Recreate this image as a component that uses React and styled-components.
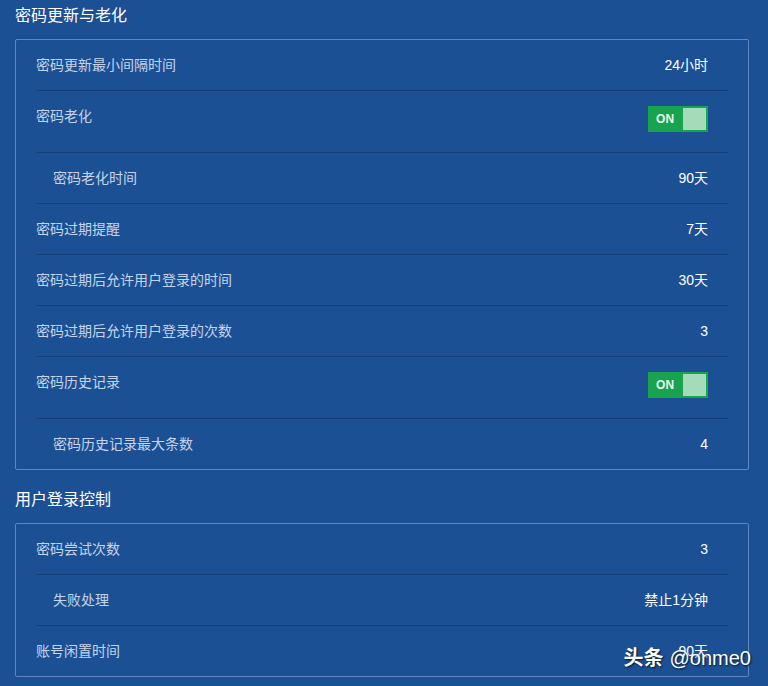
import React from "react";
import styled, { createGlobalStyle } from "styled-components";

const Global = createGlobalStyle`
  html, body {
    margin: 0;
    padding: 0;
    background: #1c5094;
    height: 686px;
    overflow: hidden;
  }
  body {
    font-family: "Liberation Sans", "Noto Sans CJK SC", sans-serif;
  }
`;

const Page = styled.div`
  position: relative;
  height: 686px;
  padding: 5px 19px 0 15px;
  box-sizing: border-box;
  background: #1c5094;
`;

const Section = styled.section`
  margin-top: ${(p) => (p.$first ? "0" : "19px")};
`;

const Title = styled.h2`
  margin: 0 0 12px;
  height: 22px;
  line-height: 22px;
  font-size: 16px;
  font-weight: 400;
  color: #ffffff;
`;

const Card = styled.div`
  border: 1px solid #6186c0;
  border-radius: 2px;
  padding: 0 20px;
`;

const Row = styled.div`
  display: flex;
  justify-content: space-between;
  align-items: flex-start;
  padding: ${(p) => (p.$toggle ? "15px 20px 20px 0" : "15px 20px 15px 0")};
  padding-left: ${(p) => (p.$indent ? "17px" : "0")};
  border-bottom: 1px solid #143f79;
  &:last-child {
    border-bottom: none;
  }
`;

const Label = styled.span`
  font-size: 14px;
  line-height: 20px;
  color: #c6d4ea;
`;

const Value = styled.span`
  font-size: 14px;
  line-height: 20px;
  color: #ffffff;
  font-weight: 400;
`;

const Switch = styled.div`
  width: 60px;
  height: 26px;
  box-sizing: border-box;
  background: #1aa34f;
  padding: 2px 2px 2px 8px;
  display: flex;
  align-items: center;
  justify-content: space-between;
`;

const SwitchText = styled.span`
  font-size: 12px;
  font-weight: 700;
  color: #e8f6ee;
  letter-spacing: 0.2px;
`;

const Knob = styled.span`
  width: 23px;
  height: 22px;
  background: #a4dbb9;
`;

const Watermark = styled.div`
  position: absolute;
  right: 17px;
  bottom: 15px;
  font-size: 20px;
  line-height: 26px;
  color: #ffffff;
  text-shadow: 1px 1px 2px rgba(0, 0, 0, 0.75);
  font-family: "Liberation Sans", "Noto Sans CJK SC", sans-serif;
  white-space: nowrap;
`;

const Strong = styled.b`
  font-weight: 700;
  margin-right: 6px;
`;

const Toggle = () => (
  <Switch>
    <SwitchText>ON</SwitchText>
    <Knob />
  </Switch>
);

const section1 = [
  { label: "密码更新最小间隔时间", value: "24小时" },
  { label: "密码老化", toggle: true },
  { label: "密码老化时间", value: "90天", indent: true },
  { label: "密码过期提醒", value: "7天" },
  { label: "密码过期后允许用户登录的时间", value: "30天" },
  { label: "密码过期后允许用户登录的次数", value: "3" },
  { label: "密码历史记录", toggle: true },
  { label: "密码历史记录最大条数", value: "4", indent: true },
];

const section2 = [
  { label: "密码尝试次数", value: "3" },
  { label: "失败处理", value: "禁止1分钟", indent: true },
  { label: "账号闲置时间", value: "90天" },
];

const Rows = ({ items }) =>
  items.map((it) => (
    <Row key={it.label} $toggle={it.toggle} $indent={it.indent}>
      <Label>{it.label}</Label>
      {it.toggle ? <Toggle /> : <Value>{it.value}</Value>}
    </Row>
  ));

export default function App() {
  return (
    <>
      <Global />
      <Page>
        <Section $first>
          <Title>密码更新与老化</Title>
          <Card>
            <Rows items={section1} />
          </Card>
        </Section>
        <Section>
          <Title>用户登录控制</Title>
          <Card>
            <Rows items={section2} />
          </Card>
        </Section>
        <Watermark>
          <Strong>头条</Strong>@onme0
        </Watermark>
      </Page>
    </>
  );
}
